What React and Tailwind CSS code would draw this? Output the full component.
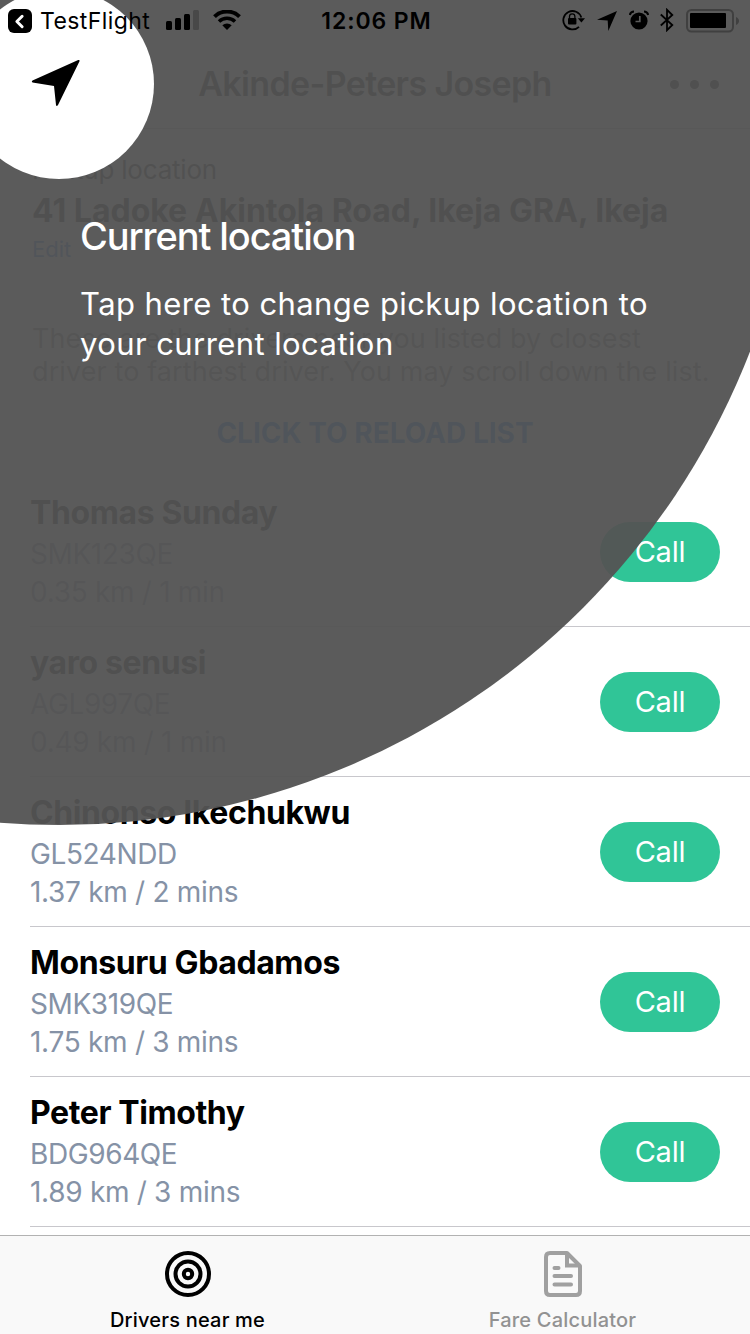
import { ChevronLeft } from 'lucide-react';

const drivers = [
  { name: 'Thomas Sunday', plate: 'SMK123QE', distance: '0.35 km / 1 min' },
  { name: 'yaro senusi', plate: 'AGL997QE', distance: '0.49 km / 1 min' },
  { name: 'Chinonso Ikechukwu', plate: 'GL524NDD', distance: '1.37 km / 2 mins' },
  { name: 'Monsuru Gbadamos', plate: 'SMK319QE', distance: '1.75 km / 3 mins' },
  { name: 'Peter Timothy', plate: 'BDG964QE', distance: '1.89 km / 3 mins' },
];

const StatusBar = () => (
  <div className="relative z-20 flex h-10 shrink-0 items-center justify-between pt-0.5 pl-2 pr-2.5 text-black">
    <div className="flex w-[300px] items-center">
      <div className="flex h-6 w-6 items-center justify-center rounded-md bg-black text-white">
        <ChevronLeft className="h-[21px] w-[21px] -translate-x-px" strokeWidth={3.4} />
      </div>
      <span className="ml-2 w-[126px] whitespace-nowrap text-[23px] leading-6 tracking-[0.4px]">TestFlight</span>
      <svg width="33" height="20" viewBox="0 0 33 20" className="-mt-0.5">
        <rect x="0" y="11" width="6" height="9" rx="1.5" />
        <rect x="9" y="8" width="6" height="12" rx="1.5" />
        <rect x="18" y="4" width="6" height="16" rx="1.5" />
        <rect x="27" y="0" width="6" height="20" rx="1.5" fill="#484848" />
      </svg>
      <svg width="28" height="20" viewBox="0 0 28 20" className="ml-3.5 -mt-0.5">
        <path d="M1.5 6.6A18 18 0 0 1 26.500 6.600" fill="none" stroke="black" strokeWidth="4" />
        <path d="M6 11.600A11.500 11.500 0 0 1 22 11.600" fill="none" stroke="black" strokeWidth="3.500" />
        <path d="M9.300 15.200A7 7 0 0 1 18.700 15.200L14 20Z" />
      </svg>
    </div>

    <span className="ml-[5px] whitespace-nowrap text-[23px] font-semibold leading-6 tracking-[0.9px]">12:06 PM</span>

    <div className="flex w-[300px] items-center justify-end">
      <svg width="23" height="22" viewBox="0 0 23 22" className="-mt-0.5">
        <path d="M19.300 8.500A9.200 9.200 0 1 0 17 17.800" fill="none" stroke="black" strokeWidth="1.800" />
        <path d="M15.800 9.300H23L19.400 13.500Z" />
        <rect x="6" y="9" width="8.400" height="6.500" rx="1" />
        <path d="M7.500 9.500V7.500a2.700 2.700 0 0 1 5.400 0v2" fill="none" stroke="black" strokeWidth="1.300" />
      </svg>
      <svg width="20" height="20" viewBox="0 0 20 20" className="ml-3">
        <path d="M20 0L11.300 20L10.700 9.500L0 8.800Z" />
      </svg>
      <svg width="20" height="20" viewBox="0 0 20 20" className="ml-3 -mt-0.5">
        <circle cx="10" cy="11" r="8.600" />
        <path d="M.8 5C1.300 2.800 2.800 1.500 5 1.500M19.200 5C18.700 2.800 17.200 1.500 15 1.500" fill="none" stroke="black" strokeWidth="2" />
        <path d="M10.800 6V11.500H6.500" fill="none" stroke="#5b5b5b" strokeWidth="1.700" />
      </svg>
      <svg width="14" height="24" viewBox="0 0 14 24" className="ml-[11px] -mt-0.5">
        <path d="M.8 6.500L12.300 17L7 22.200V1.800L12.300 7L.8 17.500" fill="none" stroke="black" strokeWidth="1.800" />
      </svg>
      <svg width="54" height="24" viewBox="0 0 54 24" className="ml-3">
        <rect x="1" y="1" width="46" height="21.500" rx="4.500" fill="none" stroke="#404040" strokeWidth="2" />
        <rect x="4" y="4" width="36" height="15" rx="1" />
        <path d="M50 8C54 9.500 54 14.500 50 16Z" fill="#404040" />
      </svg>
    </div>
  </div>
);

const DriverRow = ({ name, plate, distance }) => (
  <li className="ml-[30px] flex h-[150px] items-center justify-between border-b border-[#c8c7cc] pr-[30px]">
    <div>
      <h3 className="text-[32px] font-bold leading-[42px] tracking-[-0.4px] text-black">{name}</h3>
      <p className="text-[28px] leading-[40px] tracking-[-0.4px] text-[#8592a6]">{plate}</p>
      <p className="text-[28px] leading-[37px] tracking-[-0.3px] text-[#8592a6]">{distance}</p>
    </div>
    <button className="h-[60px] w-[120px] rounded-full bg-[#30c597] text-[29px] leading-[60px] tracking-[-0.2px] text-white">Call</button>
  </li>
);

// Circular spotlight with a hole around the location arrow
const Coachmark = () => (
  <div className="absolute inset-0 z-10 overflow-hidden">
    <div className="absolute -left-[682px] -top-[657px] h-[1482px] w-[1482px] rounded-full bg-[#545454]/[.957]" />
    <div className="absolute -left-9 -top-[11px] h-[190px] w-[190px] rounded-full bg-white" />
    <svg width="50" height="48" viewBox="0 0 50 48" className="absolute left-[31px] top-[59px]">
      <path d="M1.500 21.500L47.200 1Q49 0.500 48.500 2.300L27 46Q25.500 48 25 46L23 27L1.500 23.500Q0 22.500 1.500 21.500Z" />
    </svg>
    <div className="absolute left-20 top-[213px] w-[600px] text-white">
      <h2 className="text-[38px] font-medium leading-[46px] tracking-[-1.1px]">Current location</h2>
      <p className="mt-[25px] text-[31px] leading-10 tracking-[0.42px]">
        Tap here to change pickup location to
        <br />
        your current location
      </p>
    </div>
  </div>
);

const TabBar = () => (
  <nav className="relative z-20 grid h-[99px] shrink-0 grid-cols-2 border-t border-[#b2b2b2] bg-[#f9f9f9] text-[20px] font-medium leading-6 tracking-[0.2px]">
    <div className="flex flex-col items-center pt-[15px] text-black">
      <svg width="46" height="46" viewBox="0 0 46 46" fill="none" stroke="currentColor" strokeWidth="4">
        <circle cx="23" cy="23" r="21" />
        <circle cx="23" cy="23" r="12.500" />
        <circle cx="23" cy="23" r="4.200" />
      </svg>
      <span className="mt-[11px]">Drivers near me</span>
    </div>
    <div className="flex flex-col items-center pt-[15px] text-[#929292]">
      <svg width="38" height="46" viewBox="0 0 38 46" fill="none" stroke="#a0a0a0" strokeWidth="4" strokeLinecap="round" strokeLinejoin="round">
        <path d="M6 2H23L36 15V40Q36 44 32 44H6Q2 44 2 40V6Q2 2 6 2Z" />
        <path d="M23 3V14.500H35" strokeLinejoin="miter" />
        <path d="M10.500 17H14.500M10.500 25H27M10.500 33.500H27" />
      </svg>
      <span className="mt-[11px]">Fare Calculator</span>
    </div>
  </nav>
);

const App = () => {
  return (
    <div className="relative flex h-[1334px] w-[750px] flex-col overflow-hidden bg-white font-['Inter','Liberation_Sans',sans-serif]">
      <StatusBar />

      <header className="flex h-[89px] shrink-0 items-center justify-center border-b border-[#b2b2b2] bg-[#f8f8f8]">
        <span className="w-[100px]" />
        <h1 className="flex-1 text-center text-[34px] font-semibold leading-[40px] tracking-[-0.65px] text-black">Akinde-Peters Joseph</h1>
        <div className="flex w-[100px] gap-[11px] pl-5">
          <span className="h-[9px] w-[9px] rounded-full bg-black" />
          <span className="h-[9px] w-[9px] rounded-full bg-black" />
          <span className="h-[9px] w-[9px] rounded-full bg-black" />
        </div>
      </header>

      <section className="h-[158px] shrink-0 bg-[#f8f8f8] px-8 pt-[25px]">
        <p className="text-[26px] leading-8 tracking-[-0.2px] text-[#222]">Pickup location</p>
        <p className="mt-[7px] whitespace-nowrap text-[32px] font-bold leading-[36px] text-black">41 Ladoke Akintola Road, Ikeja GRA, Ikeja</p>
        <p className="mt-1.5 text-[22px] leading-7 text-[#2a6bd8]">Edit</p>
      </section>

      <section className="h-[190px] shrink-0 px-8 pt-[35px]">
        <p className="whitespace-nowrap text-[27px] leading-[33px] tracking-[0.1px] text-[#777]">
          These are the drivers near you listed by closest
          <br />
          driver to farthest driver. You may scroll down the list.
        </p>
        <p className="mt-7 text-center text-[28px] font-bold leading-[34px] text-[#0076ff]">CLICK TO RELOAD LIST</p>
      </section>

      <ul className="min-h-0 flex-1 overflow-hidden">
        {drivers.map((driver) => (
          <DriverRow key={driver.plate} {...driver} />
        ))}
      </ul>

      <Coachmark />
      <TabBar />
    </div>
  );
};

export default App;
